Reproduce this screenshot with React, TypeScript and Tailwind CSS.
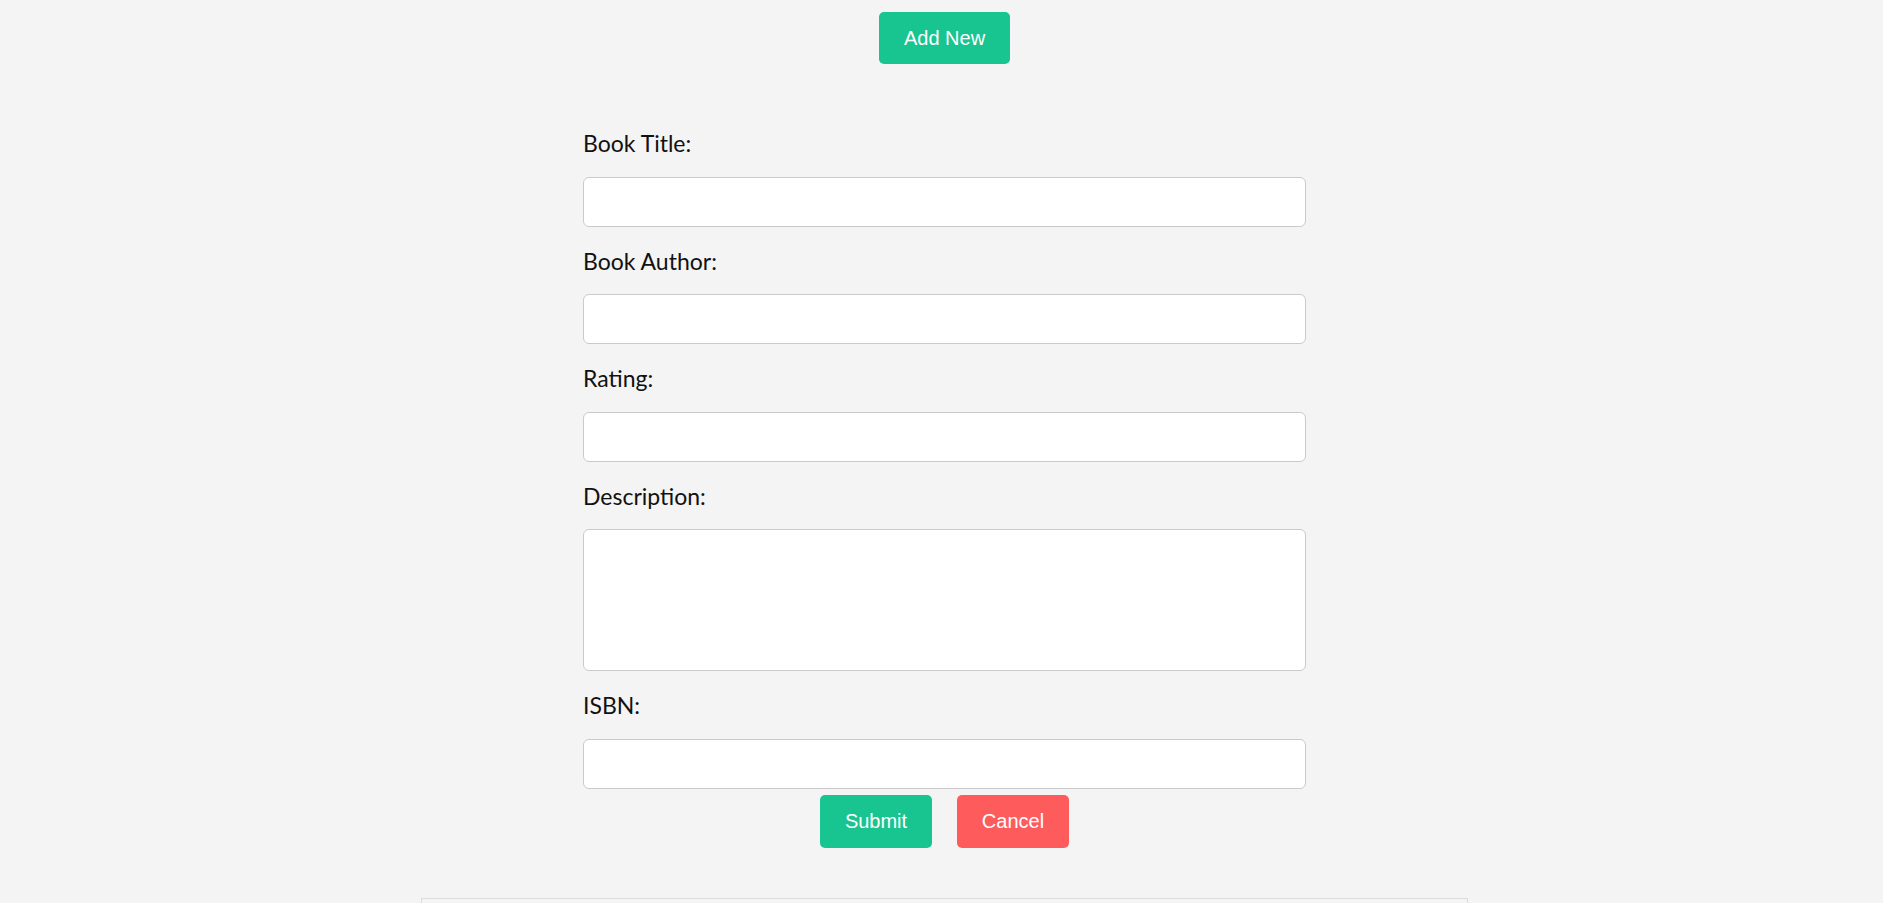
import type { ReactNode } from 'react'

const labelCls = 'block text-[23px] leading-[32px] text-[#111] font-["Lato","Open_Sans",sans-serif]'
const inputCls = 'block w-full rounded-[6px] border border-[#cacaca] bg-white'

function Field({ label, children }: { label: string; children: ReactNode }) {
  return (
    <div className="flex flex-col gap-[17.75px]">
      <label className={labelCls}>{label}</label>
      {children}
    </div>
  )
}

export default function App() {
  return (
    <div className="min-h-[903px] bg-[#f4f4f4] pl-[6px] font-['Liberation_Sans',Arial,sans-serif]">
      <div className="flex flex-col items-center">
        <button className="mt-[12px] h-[52px] w-[131px] rounded-[5px] bg-[#18c48f] text-[20px] text-white">
          Add New
        </button>

        <form className="mt-[63px] flex w-[723px] flex-col gap-[17.75px]">
          <Field label="Book Title:">
            <input className={`${inputCls} h-[50px]`} />
          </Field>
          <Field label="Book Author:">
            <input className={`${inputCls} h-[50px]`} />
          </Field>
          <Field label="Rating:">
            <input className={`${inputCls} h-[50px]`} />
          </Field>
          <Field label="Description:">
            <textarea className={`${inputCls} h-[142px] resize-none`} />
          </Field>
          <Field label="ISBN:">
            <input className={`${inputCls} h-[50px]`} />
          </Field>
        </form>

        <div className="mt-[6px] flex gap-[25px]">
          <button className="h-[53px] w-[112px] rounded-[5px] bg-[#18c48f] text-[20px] text-white">
            Submit
          </button>
          <button className="h-[53px] w-[112px] rounded-[5px] bg-[#fe5c5c] text-[20px] text-white">
            Cancel
          </button>
        </div>

        <div className="mt-[50px] h-[60px] w-[1047px] border border-[#dcdcdc]" />
      </div>
    </div>
  )
}
